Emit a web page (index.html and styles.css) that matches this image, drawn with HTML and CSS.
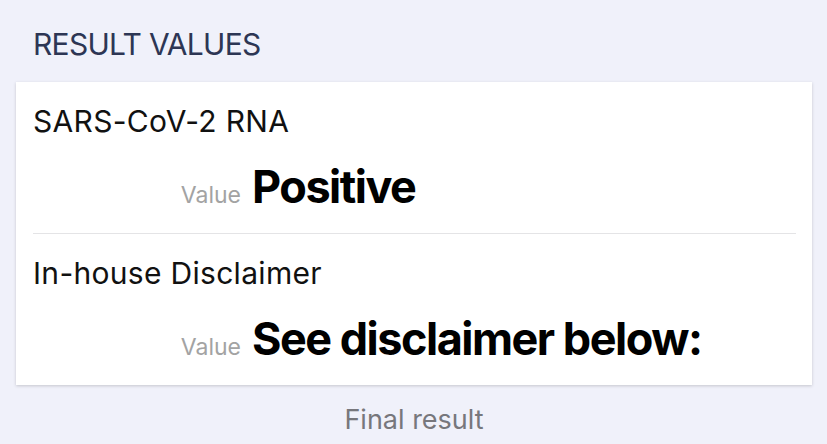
FILE: index.html
```html
<!DOCTYPE html>
<html>
<head>
<meta charset="utf-8">
<link rel="stylesheet" href="styles.css">
</head>
<body>
<div class="page">
  <h2 class="section-title">RESULT VALUES</h2>
  <div class="card">
    <div class="result">
      <div class="result-name">SARS-CoV-2 RNA</div>
      <div class="result-value-row">
        <span class="value-label">Value</span>
        <span class="value-text">Positive</span>
      </div>
    </div>
    <div class="result">
      <div class="result-name">In-house Disclaimer</div>
      <div class="result-value-row">
        <span class="value-label">Value</span>
        <span class="value-text">See disclaimer below:</span>
      </div>
    </div>
  </div>
  <div class="status">Final result</div>
</div>
</body>
</html>
```

FILE: styles.css
```css
html, body {
  margin: 0;
  padding: 0;
  background: #f0f1fa;
}
body {
  font-family: Inter, "Noto Sans", "Liberation Sans", sans-serif;
  width: 827px;
  height: 444px;
  overflow: hidden;
}
.page {
  padding: 26px 15px 0 16px;
}
.section-title {
  margin: 0 0 20px 17px;
  font-size: 30px;
  line-height: 36px;
  font-weight: 400;
  letter-spacing: -0.7px;
  color: #2d3654;
}
.card {
  background: #fff;
  box-shadow: 0 1px 3px rgba(0,0,0,0.18);
  padding: 0 16px 0 17px;
}
.result {
  padding: 21px 0 18px;
  border-bottom: 1px solid #e4e4e6;
}
.result:last-child {
  border-bottom: none;
}
.result-name {
  font-size: 30px;
  line-height: 36px;
  letter-spacing: 0.3px;
  color: #111;
}
.result-value-row {
  display: grid;
  grid-template-columns: 208px 1fr;
  column-gap: 11px;
  align-items: baseline;
  margin-top: 20px;
}
.value-label {
  text-align: right;
  font-size: 23px;
  color: #a3a3a3;
}
.value-text {
  font-size: 45px;
  line-height: 56px;
  font-weight: 700;
  letter-spacing: -1.5px;
  color: #000;
}
.status {
  text-align: center;
  font-size: 27px;
  line-height: 34px;
  color: #77777c;
  margin-top: 18px;
}
```
